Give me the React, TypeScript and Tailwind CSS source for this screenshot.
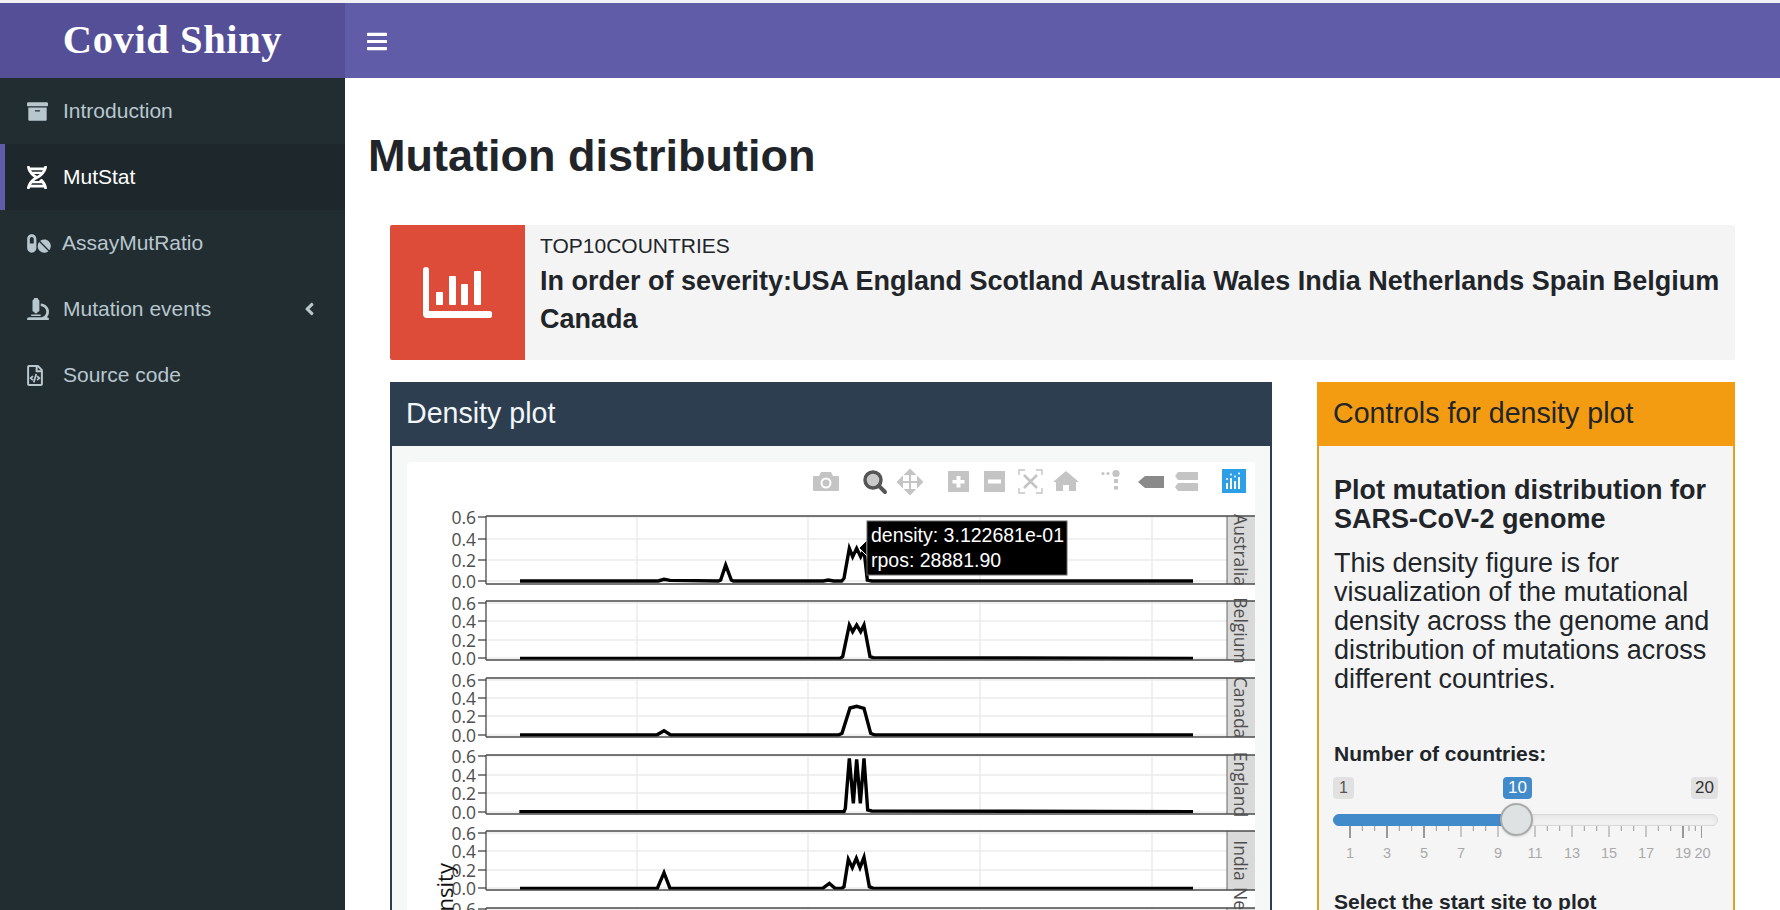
import React from "react";
import { FaArchive, FaDna, FaPills, FaMicroscope, FaRegFileCode, FaAngleLeft, FaBars } from "react-icons/fa";

const Z = (zx: number) => 390 + zx / 3;
const Y = (zy: number) => 500 + zy / 3;

type P = { top: number; bottom: number; ticks: number[]; label: string; base: number; line: [number, number][] };
const pts = (a: number[][]): [number, number][] => a.map(([x, y]) => [Z(x), Y(y)]);
const panels: P[] = [
  { top: 516, bottom: 584, ticks: [517, 539, 560, 581], label: "Australia", base: 243, line: pts([[390,243],[805,243],[822,238],[840,241],[985,243],[992,240],[1007,195],[1024,240],[1030,243],[1300,243],[1315,240],[1330,243],[1355,243],[1362,235],[1378,145],[1388,170],[1400,145],[1412,170],[1422,150],[1432,240],[1445,243]]) },
  { top: 601, bottom: 660, ticks: [603, 621, 640, 658], label: "Belgium", base: 475, line: pts([[390,475],[1350,475],[1358,470],[1378,375],[1388,395],[1400,375],[1412,395],[1422,375],[1440,470],[1450,473]]) },
  { top: 678, bottom: 737, ticks: [680, 698, 716, 735], label: "Canada", base: 705, line: pts([[390,705],[800,705],[822,692],[842,705],[1345,705],[1356,700],[1380,624],[1400,619],[1422,625],[1442,700],[1455,705]]) },
  { top: 755, bottom: 814, ticks: [756, 775, 793, 812], label: "England", base: 935, line: pts([[388,935],[1362,935],[1366,925],[1378,775],[1390,910],[1400,778],[1411,910],[1422,775],[1433,930],[1445,933]]) },
  { top: 831, bottom: 890, ticks: [833, 851, 870, 888], label: "India", base: 1165, line: pts([[390,1165],[802,1165],[822,1118],[840,1165],[1298,1165],[1318,1150],[1335,1165],[1355,1165],[1362,1160],[1375,1078],[1387,1103],[1399,1075],[1410,1103],[1422,1072],[1438,1160],[1450,1165]]) },
  { top: 908, bottom: 967, ticks: [909, 927, 945, 964], label: "Netherlands", base: 1500, line: [] },
];
const tickLabels = ["0.6", "0.4", "0.2", "0.0"];

function Plot() {
  return (
    <svg width="848" height="600" viewBox="407 462 848 600" className="block">
      <g fontFamily="'Open Sans', sans-serif" fontSize="17.5" fill="#4d4d4d">
        {panels.map((p) => {
          const endY = p.line.length ? p.line[0][1] : 0;
          return (
            <g key={p.label}>
              <rect x="486" y={p.top} width="741" height={p.bottom - p.top} fill="#ffffff" />
              {p.ticks.map((t) => (
                <line key={t} x1="486" x2="1227" y1={t} y2={t} stroke="#ebebeb" strokeWidth="1.5" />
              ))}
              {[637, 808, 980, 1152].map((x) => (
                <line key={x} x1={x} x2={x} y1={p.top} y2={p.bottom} stroke="#ebebeb" strokeWidth="1.5" />
              ))}
              {p.line.length > 0 && (
                <polyline
                  points={[...p.line, [1193, endY] as [number, number]].map((q) => q.join(",")).join(" ")}
                  fill="none"
                  stroke="#000000"
                  strokeWidth="3.4"
                  strokeLinejoin="miter"
                />
              )}
              <rect x="1227" y={p.top} width="28" height={p.bottom - p.top} fill="#d9d9d9" />
              <line x1="1227" x2="1227" y1={p.top} y2={p.bottom} stroke="#666666" />
              <line x1="486" x2="1255" y1={p.top} y2={p.top} stroke="#4a4a4a" strokeWidth="1.3" />
              <line x1="486" x2="1255" y1={p.bottom} y2={p.bottom} stroke="#4a4a4a" strokeWidth="1.3" />
              <line x1="486" x2="486" y1={p.top} y2={p.bottom} stroke="#4a4a4a" strokeWidth="1.3" />
              {p.ticks.map((t, i) => (
                <g key={t}>
                  <line x1="478" x2="486" y1={t} y2={t} stroke="#444444" strokeWidth="1.3" />
                  <text x="476" y={t + 6.5} textAnchor="end">{tickLabels[i]}</text>
                </g>
              ))}
              <text
                transform={`translate(1234 ${(p.top + p.bottom) / 2}) rotate(90)`}
                textAnchor="middle"
              >
                {p.label}
              </text>
            </g>
          );
        })}
      </g>
      <text
        transform="translate(453 863) rotate(-90)"
        textAnchor="end"
        fontFamily="'Open Sans', sans-serif"
        fontSize="22"
        fill="#111111"
      >
        density
      </text>

      <polygon points="859,548 867,540 867,556" fill="#000000" stroke="#ffffff" strokeWidth="1" />
      <rect x="867" y="521" width="200" height="54" fill="#000000" stroke="#666666" strokeWidth="1" />
      <g fontFamily="'Liberation Sans', Arial, sans-serif" fontSize="19.5" fill="#ffffff">
        <text x="871" y="542">density: 3.122681e-01</text>
        <text x="871" y="567">rpos: 28881.90</text>
      </g>

      {/* camera */}
      <g fill="#c4c4c4">
        <path d="M814 476h5l2-4h10l2 4h5a1 1 0 0 1 1 1v13a1 1 0 0 1-1 1h-24a1 1 0 0 1-1-1v-13a1 1 0 0 1 1-1z" />
        <circle cx="826" cy="483" r="5.5" fill="#ffffff" />
        <circle cx="826" cy="483" r="3.5" />
      </g>
      {/* zoom, active */}
      <g>
        <circle cx="873" cy="480" r="8" fill="#c9c9c9" stroke="#555555" strokeWidth="3.5" />
        <line x1="879" y1="486" x2="885" y2="492" stroke="#555555" strokeWidth="4" strokeLinecap="round" />
      </g>
      {/* pan */}
      <g stroke="#c4c4c4" strokeWidth="2" fill="#c4c4c4">
        <line x1="899" y1="482" x2="921" y2="482" />
        <line x1="910" y1="471" x2="910" y2="493" />
        <polygon points="898,482 902,478 902,486" />
        <polygon points="922,482 918,478 918,486" />
        <polygon points="910,470 906,474 914,474" />
        <polygon points="910,494 906,490 914,490" />
      </g>
      {/* plus */}
      <rect x="948" y="471" width="21" height="21" fill="#c4c4c4" />
      <path d="M956.5 476h4v4h4v3.5h-4v4h-4v-4h-4V480h4z" fill="#ffffff" />
      {/* minus */}
      <rect x="984" y="471" width="21" height="21" fill="#c4c4c4" />
      <rect x="988" y="479.5" width="13" height="4" fill="#ffffff" />
      {/* autoscale */}
      <g stroke="#c4c4c4" strokeWidth="1.4" fill="none">
        <path d="M1019 475v-5h6M1036 470h6v5M1042 488v5h-6M1025 493h-6v-5" />
        <path d="M1024 475l13 13M1037 475l-13 13" strokeWidth="2.6" />
      </g>
      {/* home */}
      <path d="M1066 471l13 11h-3v9h-7v-6h-6v6h-7v-9h-3z" fill="#c4c4c4" />
      {/* spike */}
      <g fill="#c4c4c4">
        <circle cx="1103" cy="473.5" r="1.6" />
        <circle cx="1108" cy="473.5" r="1.6" />
        <circle cx="1116" cy="473.5" r="3.6" />
        <rect x="1114" y="479" width="4" height="4" />
        <rect x="1114" y="486" width="4" height="3.5" />
      </g>
      {/* closest */}
      <path d="M1138 482l7-6h19v12h-19z" fill="#8a8a8a" />
      {/* compare */}
      <path d="M1175 476l3-4h20v8h-20zM1175 487l3-4h20v8h-20z" fill="#c4c4c4" />
      {/* plotly */}
      <rect x="1222" y="469" width="24" height="24" fill="#2d9fe6" />
      <g fill="#ffffff">
        <rect x="1226" y="483" width="2" height="6" />
        <rect x="1230" y="478" width="2" height="11" />
        <rect x="1234" y="481" width="2" height="8" />
        <rect x="1238" y="477" width="2" height="12" />
        <circle cx="1227" cy="479" r="1" />
        <circle cx="1235" cy="476.5" r="1" />
        <circle cx="1231" cy="474.5" r="1" />
        <circle cx="1239" cy="473.5" r="1" />
      </g>
    </svg>
  );
}

const majors = [1, 3, 5, 7, 9, 11, 13, 15, 17, 19];

function SliderScale() {
  const sx = (v: number) => 17 + (v - 1) * 18.5;
  const minor: number[] = [];
  for (let v = 1; v < 19; v += 2) {
    minor.push(sx(v) + 12.3, sx(v) + 24.7);
  }
  minor.push(sx(19) + 6, sx(19) + 12.3);
  return (
    <svg width="384" height="40" viewBox="0 0 384 40" className="block">
      <g stroke="#999999" strokeWidth="1">
        {majors.map((m) => (
          <line key={m} x1={sx(m)} x2={sx(m)} y1="0" y2={m <= 5 || m === 19 ? 12 : 11} strokeWidth={m <= 5 || m === 19 ? 2 : 1} />
        ))}
        <line x1={sx(20)} x2={sx(20)} y1="0" y2="12" />
        {minor.map((m) => (
          <line key={m} x1={m} x2={m} y1="0" y2="5" />
        ))}
      </g>
      <g fontFamily="'Liberation Sans', Arial, sans-serif" fontSize="14.5" fill="#aaaaaa" textAnchor="middle">
        {majors.map((m) => (
          <text key={m} x={sx(m)} y="32">{m}</text>
        ))}
        <text x={sx(20) + 1} y="32">20</text>
      </g>
    </svg>
  );
}

const navItems = [
  { icon: <FaArchive className="w-[21px] h-[21px]" />, label: "Introduction", gap: "ml-[15px]" },
  { icon: <FaDna className="w-[20px] h-[23px]" />, label: "MutStat", active: true, gap: "ml-[16px]" },
  { icon: <FaPills className="w-[24px] h-[21px]" />, label: "AssayMutRatio", gap: "ml-[11px]" },
  { icon: <FaMicroscope className="w-[22px] h-[22px]" />, label: "Mutation events", caret: true, gap: "ml-[14px]" },
  { icon: <FaRegFileCode className="w-[16px] h-[21px]" />, label: "Source code", gap: "ml-[20px]" },
];

export default function App() {
  return (
    <div className="w-[1780px] h-[910px] overflow-hidden bg-white flex flex-col text-[#212529] font-['Liberation_Sans',Arial,sans-serif]">
      <div className="h-[3px] shrink-0 bg-[#f1f1f6]" />
      <header className="h-[75px] shrink-0 flex">
        <div className="w-[345px] bg-[#554f98] flex items-center justify-center pb-[1px]">
          <span className="font-['Liberation_Serif',serif] font-bold text-white text-[40.5px] tracking-[0.6px]">Covid Shiny</span>
        </div>
        <div className="flex-1 bg-[#605ca8] flex items-center pl-[22px] pt-[2px]">
          <FaBars className="w-[20px] h-[23px] text-white" />
        </div>
      </header>
      <div className="flex flex-1 min-h-0">
        <aside className="w-[345px] shrink-0 bg-[#222d32]">
          {navItems.map((n) => (
            <div
              key={n.label}
              className={
                n.active
                  ? "h-[66px] flex items-center pl-[22px] pr-[29px] bg-[#1e282c] border-l-[5px] border-[#605ca8] text-white text-[21px]"
                  : "h-[66px] flex items-center pl-[27px] pr-[29px] text-[#b8c7ce] text-[21px]"
              }
            >
              <span className="flex items-center">{n.icon}</span>
              <span className={n.gap}>{n.label}</span>
              {n.caret && <FaAngleLeft className="ml-auto w-[13px] h-[20px] -mt-[1px]" />}
            </div>
          ))}
        </aside>
        <main className="flex-1 min-w-0">
          <h1 className="pl-[23px] pt-[51px] h-[147px] text-[45px] leading-[54px] font-bold">Mutation distribution</h1>
          <div className="mx-[45px]">
            <div className="h-[135px] flex bg-[#f4f4f4] rounded-[2px] overflow-hidden">
              <div className="w-[135px] shrink-0 bg-[#dd4b39] flex items-center justify-center">
                <svg width="69" height="52" viewBox="0 0 69 52" fill="#ffffff">
                  <path d="M0 3a3 3 0 0 1 6 0v41h60a3.5 3.5 0 0 1 0 7H4a4 4 0 0 1-4-4z" />
                  <rect x="13" y="25" width="7" height="13" rx="1" />
                  <rect x="26" y="9" width="7" height="29" rx="1" />
                  <rect x="38" y="17" width="7" height="21" rx="1" />
                  <rect x="51" y="4" width="7" height="34" rx="1" />
                </svg>
              </div>
              <div className="flex-1 pl-[15px] pt-[9px] pr-[10px]">
                <div className="text-[21px] leading-[24px]">TOP10COUNTRIES</div>
                <div className="text-[27px] leading-[38px] font-bold mt-[4px]">
                  In order of severity:USA England Scotland Australia Wales India Netherlands Spain Belgium Canada
                </div>
              </div>
            </div>
            <div className="flex justify-between mt-[22px]">
              <section className="w-[882px] border-2 border-[#2c3e50] bg-[#f6f7f7]">
                <div className="h-[64px] -mx-[2px] -mt-[2px] bg-[#2c3e50] text-[#f2f6f8] text-[28.6px] leading-[63px] pl-[16px]">Density plot</div>
                <div className="mt-[1px] p-[15px]">
                  <div className="bg-white rounded-[4px] overflow-hidden">
                    <Plot />
                  </div>
                </div>
              </section>
              <section className="w-[418px] border-2 border-[#d9a426] bg-[#f5f5f5]">
                <div className="h-[64px] -mx-[2px] -mt-[2px] bg-[#f39c12] text-[#1f2529] text-[28.6px] leading-[63px] pl-[16px]">Controls for density plot</div>
                <div className="px-[15px] pt-[30px]">
                  <h3 className="text-[27px] leading-[29px] font-bold">Plot mutation distribution for SARS-CoV-2 genome</h3>
                  <p className="text-[27px] leading-[29px] mt-[15px]">This density figure is for visualization of the mutational density across the genome and distribution of mutations across different countries.</p>
                  <div className="text-[21px] leading-[24px] font-bold mt-[48px]">Number of countries:</div>
                  <div className="relative mt-[11px] -ml-[1px] h-[22px] w-[385px] flex justify-between text-[16px] leading-[22px] text-[#333333]">
                    <span className="px-[6px] bg-[#e1e1e1] rounded-[4px] text-[#555555]">1</span>
                    <span className="absolute left-[170px] px-[5px] bg-[#428bca] rounded-[4px] text-white text-[17px]">10</span>
                    <span className="px-[4px] bg-[#e1e1e1] rounded-[4px] text-[17px]">20</span>
                  </div>
                  <div className="relative mt-[15px] -ml-[1px] h-[12px] w-[385px] rounded-full bg-[#f0f0f0] border border-[#d8d8d8] shadow-inner">
                    <div className="h-full w-[185px] bg-[#428bca] rounded-l-full -m-[1px] box-content border border-[#428bca]" />
                    <div className="absolute left-[166px] -top-[12px] w-[33px] h-[33px] rounded-full bg-[#dfe2e2] border-2 border-[#aaaaaa] shadow" />
                  </div>
                  <div className="-ml-[1px]">
                    <SliderScale />
                  </div>
                  <div className="text-[21px] leading-[24px] font-bold mt-[24px]">Select the start site to plot</div>
                </div>
              </section>
            </div>
          </div>
        </main>
      </div>
    </div>
  );
}
